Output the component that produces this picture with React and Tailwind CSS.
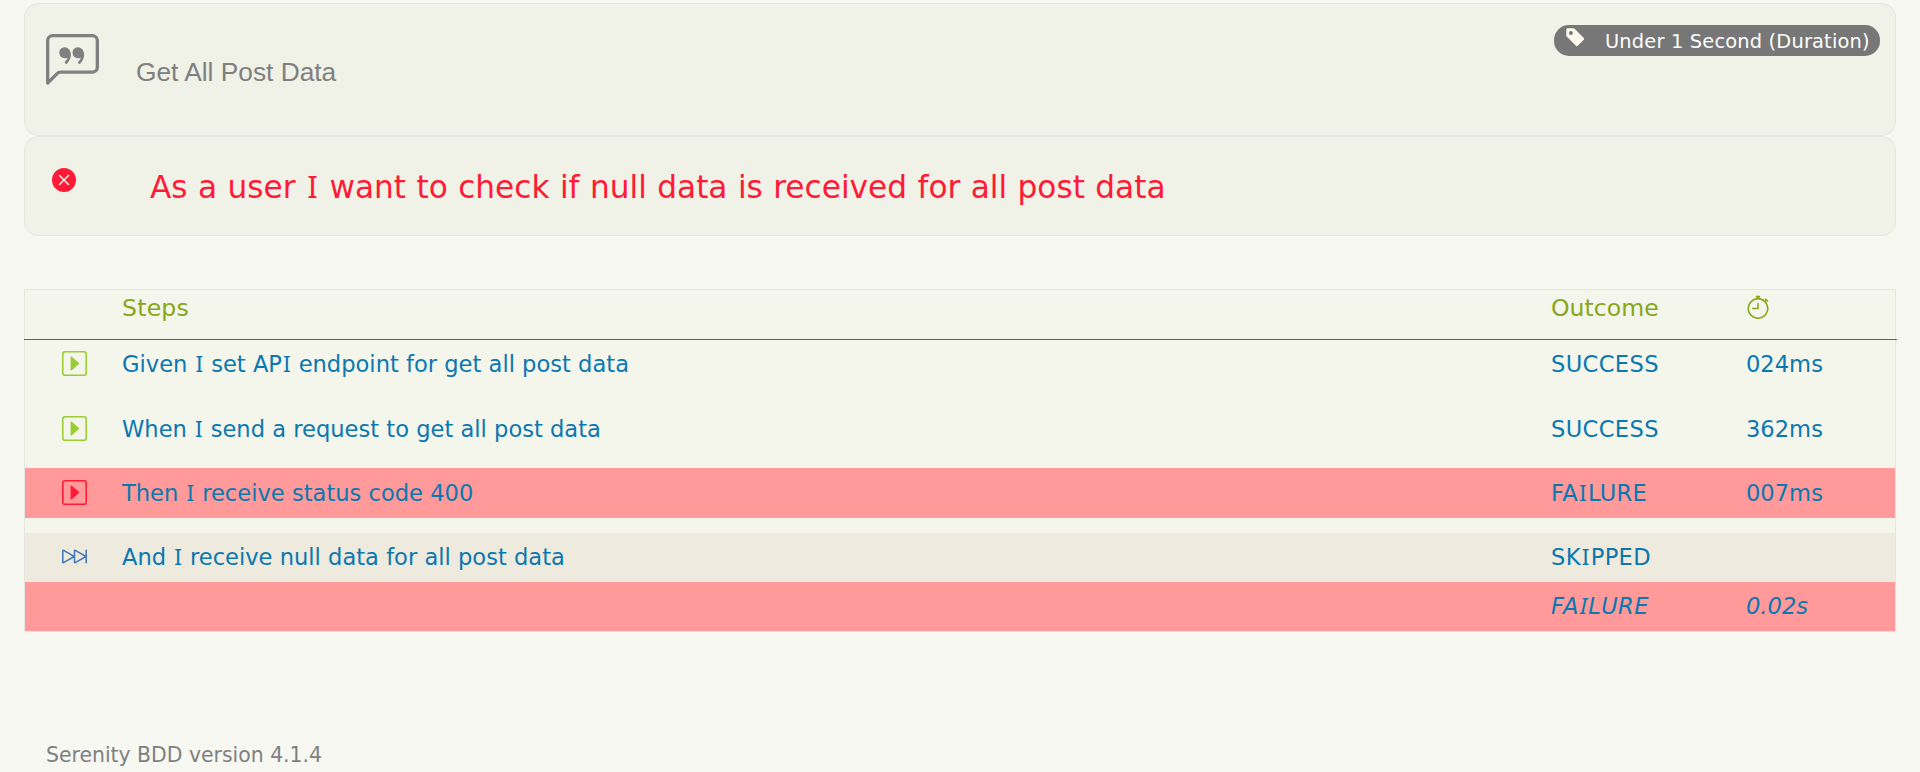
import { Fragment } from "react";
import { BsChatLeftQuote, BsXCircleFill, BsTagFill, BsCaretRightSquare, BsSkipForward, BsStopwatch } from "react-icons/bs";

// DejaVu Sans draws a bare capital I; Noto Sans has the serifed form.
function Label({ children }) {
  return children.split("I").map((part, i) => (
    <Fragment key={i}>
      {i > 0 && <span className="mx-[0.04em] font-['Noto_Sans'] leading-none">I</span>}
      {part}
    </Fragment>
  ));
}

const steps = [
  { text: "Given I set API endpoint for get all post data", outcome: "SUCCESS", time: "024ms", Icon: BsCaretRightSquare, color: "text-[#9acd32]", row: "h-[65px] pb-[18px]" },
  { text: "When I send a request to get all post data", outcome: "SUCCESS", time: "362ms", Icon: BsCaretRightSquare, color: "text-[#9acd32]", row: "h-[63px] pb-[16px]" },
  { text: "Then I receive status code 400", outcome: "FAILURE", time: "007ms", Icon: BsCaretRightSquare, color: "text-[#ff1a35]", row: "h-[50px] mb-[15px] bg-[#ff999a]" },
  { text: "And I receive null data for all post data", outcome: "SKIPPED", time: "", Icon: BsSkipForward, color: "text-[#4579b8]", row: "h-[49px] pb-[2px] bg-[#eeeadd]" },
];

export default function App() {
  return (
    <div className="flex h-[772px] flex-col overflow-hidden bg-[#f7f8f2] pl-6 pr-[23px] pt-[3px] font-['DejaVu_Sans',Verdana,sans-serif]">
      <div className="mr-px flex h-[133px] shrink-0 items-start rounded-[14px] border border-[#e5e6e1] bg-[#f0f1e7] pl-[21px] pr-[15px]">
        <BsChatLeftQuote className="mt-[30px] size-[53px] text-[#808080]" />
        <h2 className="ml-[37px] mt-[52px] font-['Liberation_Sans',Arial,sans-serif] text-[26.3px] leading-[32px] text-[#808080]">Get All Post Data</h2>
        <span className="ml-auto mt-[21px] flex h-[31px] w-[326px] items-center rounded-[15px] bg-[#777] pl-[11px] text-[19.4px] tracking-[0.18px] text-white">
          <BsTagFill className="-mt-1.5 mr-[20px] size-[21px] text-[#fffaf0]" />
          <span className="-ml-px pt-0.5">Under 1 Second (Duration)</span>
        </span>
      </div>
      <div className="mr-px flex h-[100px] shrink-0 items-start rounded-[14px] border border-[#e5e6e1] bg-[#f0f1e7] pl-[27px]">
        <BsXCircleFill className="mt-[31px] size-6 text-[#ff1a35]" />
        <h3 className="ml-[74px] mt-[30px] text-[31.2px] leading-[40px] text-[#ff1a35] [word-spacing:0.5px]"><Label>As a user I want to check if null data is received for all post data</Label></h3>
      </div>
      <section className="mr-px mt-[53px] h-[343px] shrink-0 border border-[#e5e6e1] bg-[#f4f5eb] text-[22.6px] leading-7 text-[#0b78b0]">
        <div className="-mx-px flex h-[50px] w-[1873px] items-center border-b border-[#0b78b0] pb-[13px] text-[23.6px] text-[#8aa61a]">
          <span className="w-[1429px] pl-[98px] tracking-[0.2px]">Steps</span>
          <span className="ml-[98px] w-[195px]">Outcome</span>
          <BsStopwatch className="mb-[3px] size-6" />
        </div>
        {steps.map(({ text, outcome, time, Icon, color, row }) => (
          <div key={text} className={`flex items-center ${row}`}>
            <Icon className={`mb-px ml-[37px] size-[25px] ${color}`} />
            <span className="ml-[35px] w-[1429px]"><Label>{text}</Label></span>
            <span className="w-[195px] tracking-[0.35px]"><Label>{outcome}</Label></span>
            <span>{time}</span>
          </div>
        ))}
        <div className="flex h-[49px] items-center bg-[#ff999a] pb-[2px] pl-[1526px] italic">
          <span className="w-[195px] tracking-[0.35px]"><Label>FAILURE</Label></span>
          <span>0.02s</span>
        </div>
      </section>
      <footer className="mt-[109px] pl-[22px] text-[20.4px] leading-7 text-[#808080]">Serenity BDD version 4.1.4</footer>
    </div>
  );
}
